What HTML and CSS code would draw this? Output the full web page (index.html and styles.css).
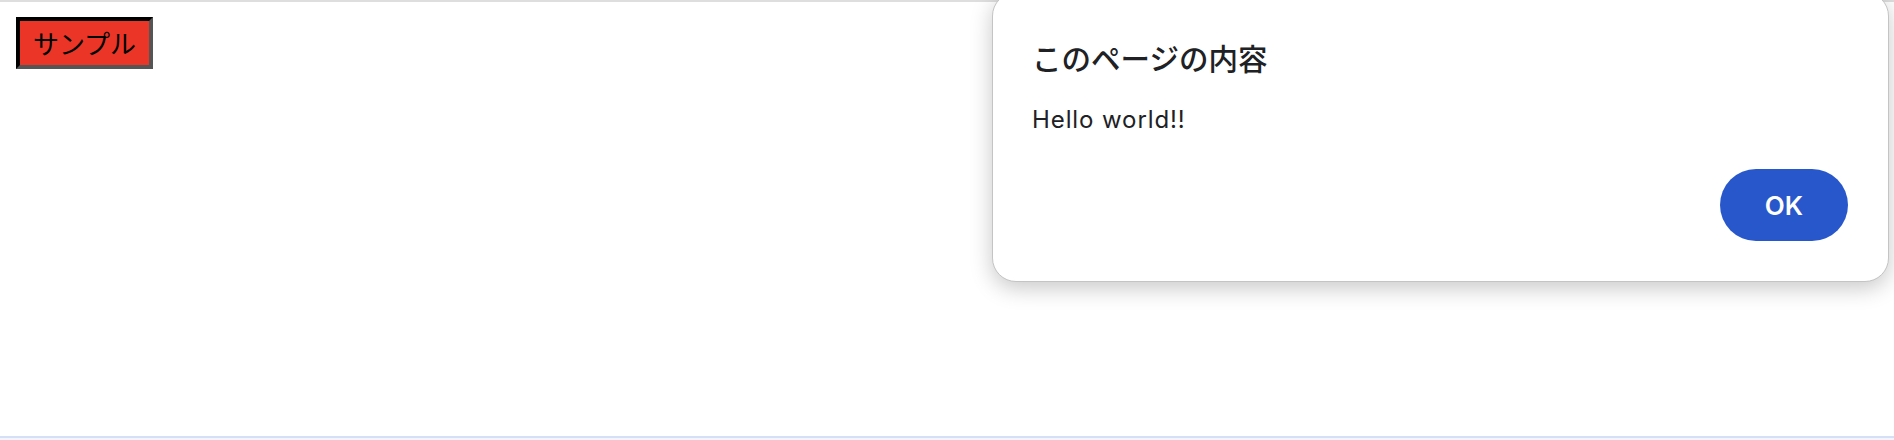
FILE: index.html
```html
<!DOCTYPE html>
<html lang="ja">
<head>
<meta charset="utf-8">
<title>sample</title>
<link rel="stylesheet" href="styles.css">
</head>
<body>
<div class="page">
  <div class="topbar"></div>
  <main class="content">
    <button class="sample-btn" type="button">サンプル</button>
  </main>
  <div class="bottombar"></div>
</div>
<div class="alert" role="alertdialog">
  <h2 class="alert-title">このページの内容</h2>
  <p class="alert-msg">Hello world!!</p>
  <div class="alert-actions">
    <button class="ok-btn" type="button">OK</button>
  </div>
</div>
</body>
</html>
```
FILE: styles.css
```css
html, body {
  margin: 0;
  padding: 0;
  background: #ffffff;
}
.page {
  height: 440px;
  display: flex;
  flex-direction: column;
}
.topbar {
  height: 2px;
  background: #dedede;
}
.content {
  flex: 1;
  padding: 15px 16px;
}
.bottombar {
  height: 2px;
  border-bottom: 2px solid #f2f5fc;
  background: #d5dff5;
}
.sample-btn {
  display: block;
  margin: 0;
  padding: 0 12px;
  height: 52px;
  width: 137px;
  border-style: solid;
  border-width: 4px;
  border-color: #000000 #555555 #555555 #000000;
  background: #ea3527;
  color: #000000;
  font-family: "Noto Sans CJK JP", sans-serif;
  font-size: 26px;
  line-height: 44px;
  white-space: nowrap;
}
.alert {
  position: absolute;
  left: 992px;
  top: -8px;
  width: 897px;
  height: 290px;
  box-sizing: border-box;
  padding: 40px 40px 40px 39px;
  background: #ffffff;
  border: 1px solid #c4c4c4;
  border-radius: 24px;
  box-shadow: 0 6px 22px rgba(0, 0, 0, 0.22);
  display: flex;
  flex-direction: column;
  font-family: Inter, "Noto Sans CJK JP", sans-serif;
  color: #202124;
}
.alert-title {
  margin: 4px 0 0;
  font-family: "Noto Sans CJK JP", sans-serif;
  font-size: 29.5px;
  font-weight: 500;
  line-height: 40px;
}
.alert-msg {
  margin: 27px 0 0;
  font-size: 24px;
  letter-spacing: 0.9px;
  line-height: 32px;
}
.alert-actions {
  margin-top: auto;
  display: flex;
  justify-content: flex-end;
}
.ok-btn {
  width: 128px;
  height: 72px;
  border: none;
  border-radius: 36px;
  background: #2757cb;
  color: #ffffff;
  font-family: Inter, sans-serif;
  font-size: 26px;
  font-weight: 600;
}
```
